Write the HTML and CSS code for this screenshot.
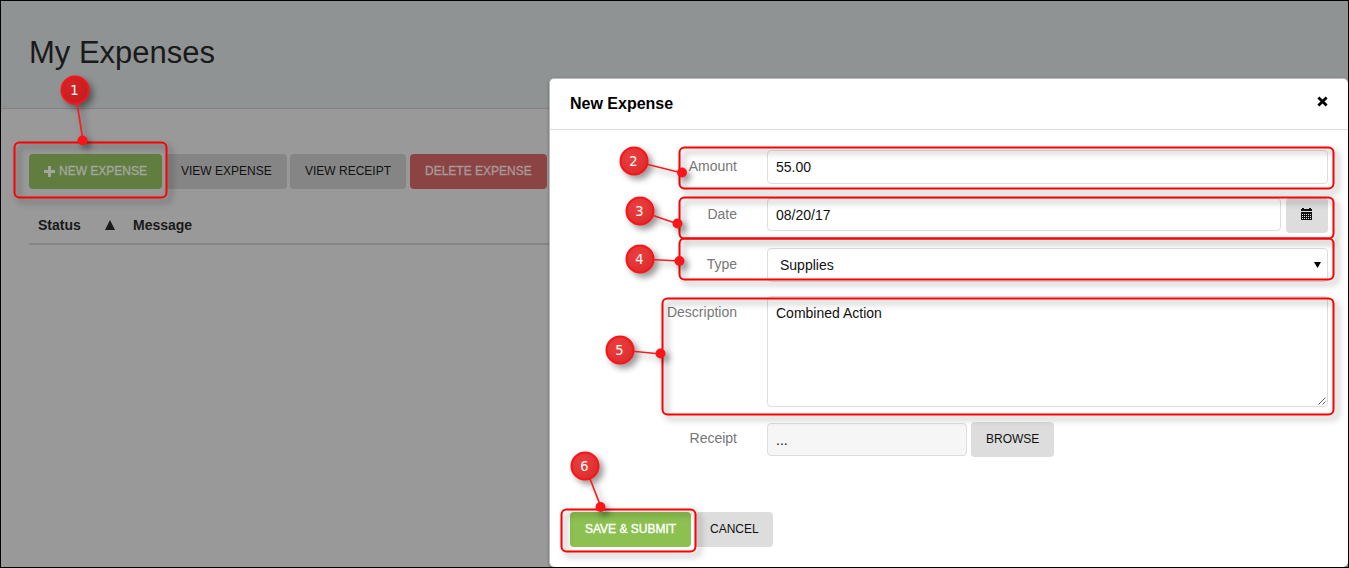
FILE: index.html
```html
<!DOCTYPE html>
<html lang="en">
<head>
<meta charset="utf-8">
<title>My Expenses</title>
<link rel="stylesheet" href="styles.css">
</head>
<body>
<div class="screen">
  <header class="page-header"><h1 class="page-title">My Expenses</h1></header>
  <main class="content">
    <div class="toolbar">
      <div class="btn btn-new"><svg class="plus" width="11" height="11" viewBox="0 0 11 11"><path d="M4 0h3v4h4v3H7v4H4V7H0V4h4z" fill="currentColor"/></svg>NEW EXPENSE</div>
      <div class="btn btn-dim btn-view">VIEW EXPENSE</div>
      <div class="btn btn-dim btn-receipt">VIEW RECEIPT</div>
      <div class="btn btn-delete">DELETE EXPENSE</div>
    </div>
    <div class="table-head">
      <span class="col-status">Status</span>
      <svg class="sort" width="10" height="10" viewBox="0 0 10 10"><path d="M5 0l5 10H0z" fill="#1a1a1a"/></svg>
      <span>Message</span>
    </div>
  </main>

  <section class="modal">
    <div class="modal-header">
      <h2 class="modal-title">New Expense</h2>
      <svg class="close" width="11" height="11" viewBox="0 0 11 11"><path d="M1.400 1.400l8.200 8.200M9.600 1.400L1.400 9.600" stroke="#000" stroke-width="2.800"/></svg>
    </div>
    <div class="form">
      <div class="row row-amount"><span class="label">Amount</span><div class="input grow">55.00</div></div>
      <div class="row row-date"><span class="label">Date</span><div class="input grow">08/20/17</div>
        <div class="date-btn"><svg width="11" height="12" viewBox="0 0 11 12" shape-rendering="crispEdges"><path d="M1 0h2v1h5V0h2v1h1v2H0V1h1zM0 4h11v8H0z" fill="#111"/><path d="M1 6h9M1 8h9M1 10h9" transform="translate(0 .5)" stroke="#ddd" stroke-width="1" stroke-dasharray="1 1"/></svg></div>
      </div>
      <div class="row row-type"><span class="label">Type</span><div class="input select grow">Supplies<svg width="7" height="6" viewBox="0 0 7 6"><path d="M0 0h7L3.500 6z"/></svg></div></div>
      <div class="row row-desc"><span class="label">Description</span><div class="input area grow">Combined Action<svg class="grip" width="8" height="8" viewBox="0 0 8 8"><path d="M.5 7.5l7-7M4.5 7.5l3-3" stroke="#555" stroke-width=".9"/></svg></div></div>
      <div class="row row-file"><span class="label">Receipt</span><div class="input file">...</div><div class="btn btn-grey">BROWSE</div></div>
    </div>
    <div class="actions"><div class="btn btn-save">SAVE &amp; SUBMIT</div><div class="btn btn-grey">CANCEL</div></div>
  </section>

  <svg class="callouts" width="1349" height="568" viewBox="0 0 1349 568">
    <defs>
      <filter id="shadow" filterUnits="userSpaceOnUse" x="0" y="0" width="1349" height="568" color-interpolation-filters="sRGB"><feDropShadow dx="4" dy="4" stdDeviation="3.2" flood-color="#000" flood-opacity=".4"/></filter>
      <radialGradient id="ball" cx=".4" cy=".35" r=".75"><stop offset="0" stop-color="#ea4040"/><stop offset="1" stop-color="#dc2b2b"/></radialGradient>
      <radialGradient id="balldim" cx=".35" cy=".3" r=".8"><stop offset="0" stop-color="#d52528"/><stop offset="1" stop-color="#c51b1e"/></radialGradient>
    </defs>
    <g class="frames" filter="url(#shadow)">
      <rect x="14.5" y="142.5" width="152" height="55" rx="5"/>
      <rect x="679.5" y="147.5" width="654" height="41" rx="5"/>
      <rect x="679.5" y="197.5" width="654" height="41" rx="5"/>
      <rect x="679.5" y="238.5" width="654" height="41" rx="5"/>
      <rect x="662.5" y="298.5" width="671" height="116" rx="5"/>
      <rect x="561.5" y="509.5" width="134" height="42" rx="5"/>
    </g>
    <g class="pins" filter="url(#shadow)">
      <path d="M75 90l8 51M634 161l48 12M640 211l38 13M640 259l40 2M620 350l41 4M585 466l16 41"/>
      <g class="dots"><circle cx="82.500" cy="140.500" r="5"/><circle cx="682" cy="172.500" r="5"/><circle cx="677.500" cy="223.500" r="5"/><circle cx="679.500" cy="261" r="5"/><circle cx="660.500" cy="353.500" r="5"/><circle cx="600.500" cy="507" r="5"/></g>
      <g class="balls"><circle class="dim" cx="75" cy="90" r="13.500"/><circle cx="634" cy="161" r="13.500"/><circle cx="640" cy="211" r="13.500"/><circle cx="640" cy="259" r="13.500"/><circle cx="620" cy="350" r="13.500"/><circle cx="585" cy="466" r="13.500"/></g>
    </g>
    <g class="numbers"><text x="74.500" y="95">1</text><text x="633.500" y="166">2</text><text x="639.500" y="216">3</text><text x="639.500" y="264">4</text><text x="619.500" y="355">5</text><text x="584.500" y="471">6</text></g>
  </svg>
</div>
</body>
</html>
```
FILE: styles.css
```css
* { box-sizing: border-box; }
body { margin: 0; font-family: "Liberation Sans", Arial, sans-serif; font-size: 14px; }
.screen { position: relative; width: 1349px; height: 568px; border: 1px solid #000; background: #999; overflow: hidden; }

.page-header { height: 108px; padding: 34px 0 0 28px; background: #8f9393; border-bottom: 1px solid #838383; }
.page-title { margin: 0; font-size: 31px; line-height: 36px; font-weight: 400; color: #1a1a1a; }

.content { padding: 45px 28px 0; }
.toolbar { display: flex; }
.btn { height: 35px; padding: 0 15px; border-radius: 4px; font-size: 12px; line-height: 34px; white-space: nowrap; color: #111; }
.btn-new { display: flex; align-items: center; width: 133px; margin-right: 4px; padding: 0 0 1px 15px; background: #617e40; color: #a3a69e; -webkit-text-stroke: .35px currentColor; }
.plus { margin-right: 4px; flex: none; }
.btn-dim { background: #858585; }
.btn-view { width: 121px; margin-right: 3px; }
.btn-receipt { width: 116px; margin-right: 4px; }
.btn-delete { width: 137px; background: #8c4343; color: #a7999a; -webkit-text-stroke: .35px currentColor; }
.table-head { display: flex; align-items: center; height: 39px; margin-top: 17px; padding-left: 9px; border-bottom: 2px solid #858585; font-weight: 700; color: #1a1a1a; }
.col-status { width: 67px; }
.sort { margin-right: 18px; }

.modal { position: absolute; left: 548px; top: 77px; width: 799px; height: 489px; background: #fff; border: 1px solid #bbb; border-width: 1px 0 0 1px; border-radius: 5px; box-shadow: 0 1px 3px rgba(0,0,0,.35); }
.modal-header { display: flex; justify-content: space-between; height: 51px; padding: 15px 20px 0 20px; border-bottom: 1px solid #ddd; }
.modal-title { margin: 0; font-size: 16px; line-height: 20px; color: #000; }
.close { margin-top: 2px; }
.form { padding: 20px 20px 0 0; }
.row { display: flex; height: 49px; }
.label { width: 187px; margin-right: 30px; padding-top: 8px; line-height: 16px; text-align: right; color: #777; }
.input { height: 34px; padding: 0 8px; border: 1px solid #ddd; border-radius: 4px; line-height: 33px; color: #111; }
.grow { flex: 1; }
.row-date { margin-top: -1px; }
.row-date .input { height: 33px; }
.date-btn { display: flex; align-items: center; justify-content: center; width: 42px; height: 35px; margin-left: 5px; padding: 0 1px 4px 0; border-radius: 4px; background: #ddd; }
.row-type { margin-top: 1px; }
.select { display: flex; align-items: center; justify-content: space-between; padding: 0 6px 0 12px; }
.row-desc { height: 125px; }
.row-desc .label { padding-top: 7px; }
.area { position: relative; height: 111px; margin-top: -1px; line-height: 32px; }
.grip { position: absolute; right: 1px; bottom: 1px; }
.row-file { height: 35px; }
.file { width: 200px; height: 33px; margin: 1px 4px 0 0; background: #f6f6f6; }
.btn-grey { background: #ddd; }
.actions { display: flex; gap: 4px; margin: 55px 0 0 20px; }
.btn-save { width: 121px; background: #8cc152; color: #fff; -webkit-text-stroke: .35px currentColor; }
.actions .btn-grey { width: 78px; }

.callouts { position: absolute; left: -1px; top: -1px; }
.frames { fill: none; stroke: #f00; stroke-width: 2; }
.pins { stroke: #fa1c20; stroke-width: 1.7; }
.dots { stroke: none; fill: #fb1418; }
.balls { fill: url(#ball); stroke: #fa1418; stroke-width: 2; }
.dim { fill: url(#balldim); }
.numbers { font-family: "DejaVu Sans Condensed", "DejaVu Sans", sans-serif; font-stretch: condensed; font-size: 14.5px; text-anchor: middle; fill: #fff; }
```
